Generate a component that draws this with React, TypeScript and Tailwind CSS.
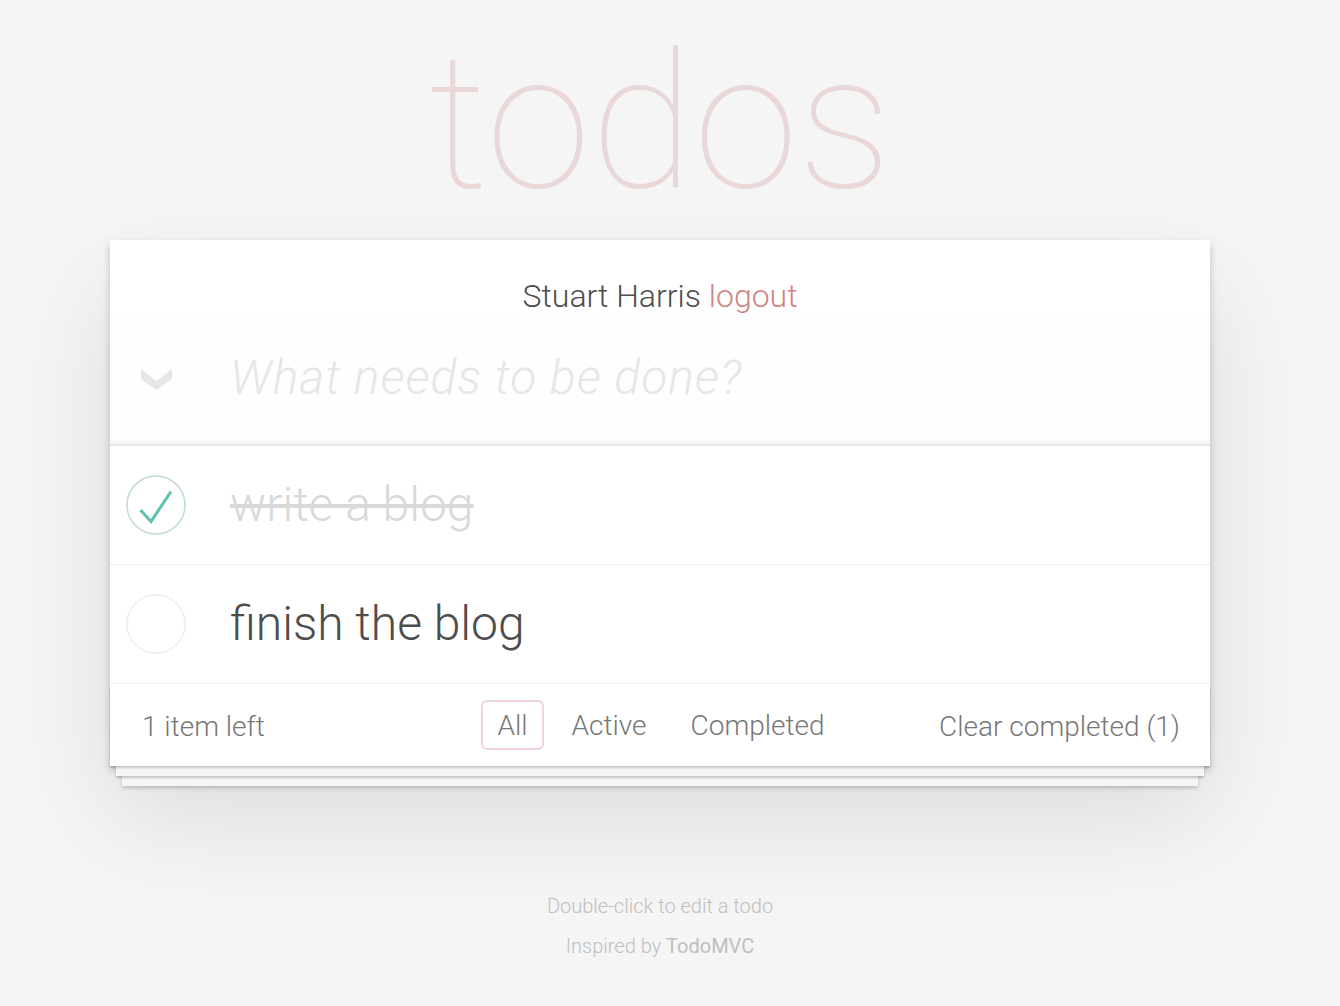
import { useState } from "react";

type Todo = { id: number; title: string; completed: boolean };

function ToggleAllIcon() {
  return (
    <svg width="33" height="23" viewBox="0 0 33 23" fill="#e6e6e6">
      <polygon points="1,1 16.5,13 32,1 32,11 16.5,22 1,11" />
    </svg>
  );
}

function CheckCircle({ done }: { done: boolean }) {
  return (
    <svg width="60" height="60" viewBox="0 0 60 60" fill="none">
      <circle cx="30" cy="30" r="29" stroke={done ? "#bddad5" : "#ededed"} strokeWidth="1.5" />
      {done && <path d="M14.5 35 L25 46.5 L45 16.5" stroke="#5dc2af" strokeWidth="3" />}
    </svg>
  );
}

export default function App() {
  const [todos] = useState<Todo[]>([
    { id: 1, title: "write a blog", completed: true },
    { id: 2, title: "finish the blog", completed: false },
  ]);
  const left = todos.filter((t) => !t.completed).length;
  const done = todos.length - left;

  return (
    <div className="min-h-screen bg-[#f5f5f5] font-[Roboto,sans-serif] text-[#4d4d4d]">
      <div className="w-[1320px]">
        <div className="w-[1100px] mx-auto">
          <h1 className="pt-[23px] mb-[17px] text-center text-[189px] leading-[200px] font-thin text-[rgba(175,47,47,0.15)]">todos</h1>

          <section className="bg-white shadow-[0_4px_8px_rgba(0,0,0,0.2),0_50px_100px_rgba(0,0,0,0.1)]">
            <div className="pt-[40px] text-center text-[32px] leading-[32px] font-light">
              Stuart Harris <a href="#" className="text-[#cf8383]">logout</a>
            </div>

            <div className="flex items-center h-[134px] border-b-2 border-[#e6e6e6] bg-[rgba(0,0,0,0.003)] shadow-[inset_0_-4px_2px_rgba(0,0,0,0.03)]">
              <div className="w-[92px] flex justify-center pt-[3px]">
                <ToggleAllIcon />
              </div>
              <input
                className="flex-1 pl-7 pr-8 bg-transparent outline-none text-[48px] tracking-[1px] font-light italic placeholder:text-[#e6e6e6]"
                placeholder="What needs to be done?"
              />
            </div>

            <ul>
              {todos.map((t) => (
                <li key={t.id} className="flex items-center h-[119px] border-b border-[#ededed]">
                  <div className="w-[92px] flex justify-center">
                    <CheckCircle done={t.completed} />
                  </div>
                  <span className={t.completed ? "pl-7 text-[48px] font-light text-[#d9d9d9] line-through" : "pl-7 text-[48px] font-light text-[#4d4d4d]"}>
                    {t.title}
                  </span>
                </li>
              ))}
            </ul>

            <footer className="grid grid-cols-[1fr_auto_1fr] items-center py-4 pl-8 pr-[30px] text-[28px] leading-[32px] font-light text-[#777] shadow-[0_2px_2px_rgba(0,0,0,0.2),0_16px_0_-6px_#f6f6f6,0_18px_2px_-6px_rgba(0,0,0,0.2),0_32px_0_-12px_#f6f6f6,0_34px_4px_-12px_rgba(0,0,0,0.2)]">
              <span className="pt-[3px]">{left} item left</span>
              <ul className="flex">
                <li><a href="#" className="block mx-[6px] px-[14px] pt-[8px] pb-[6px] border-2 rounded-md border-[rgba(175,47,47,0.2)]">All</a></li>
                <li><a href="#" className="block mx-[6px] px-[14px] pt-[8px] pb-[6px] border-2 rounded-md border-transparent">Active</a></li>
                <li><a href="#" className="block mx-[6px] px-[14px] pt-[8px] pb-[6px] border-2 rounded-md border-transparent">Completed</a></li>
              </ul>
              <button className="justify-self-end pt-[3px] font-light">Clear completed ({done})</button>
            </footer>
          </section>

          <footer className="mt-[130px] text-center text-[20px] leading-[20px] font-light text-[#bfbfbf] space-y-5">
            <p>Double-click to edit a todo</p>
            <p>Inspired by <a href="#" className="font-normal">TodoMVC</a></p>
          </footer>
        </div>
      </div>
    </div>
  );
}
